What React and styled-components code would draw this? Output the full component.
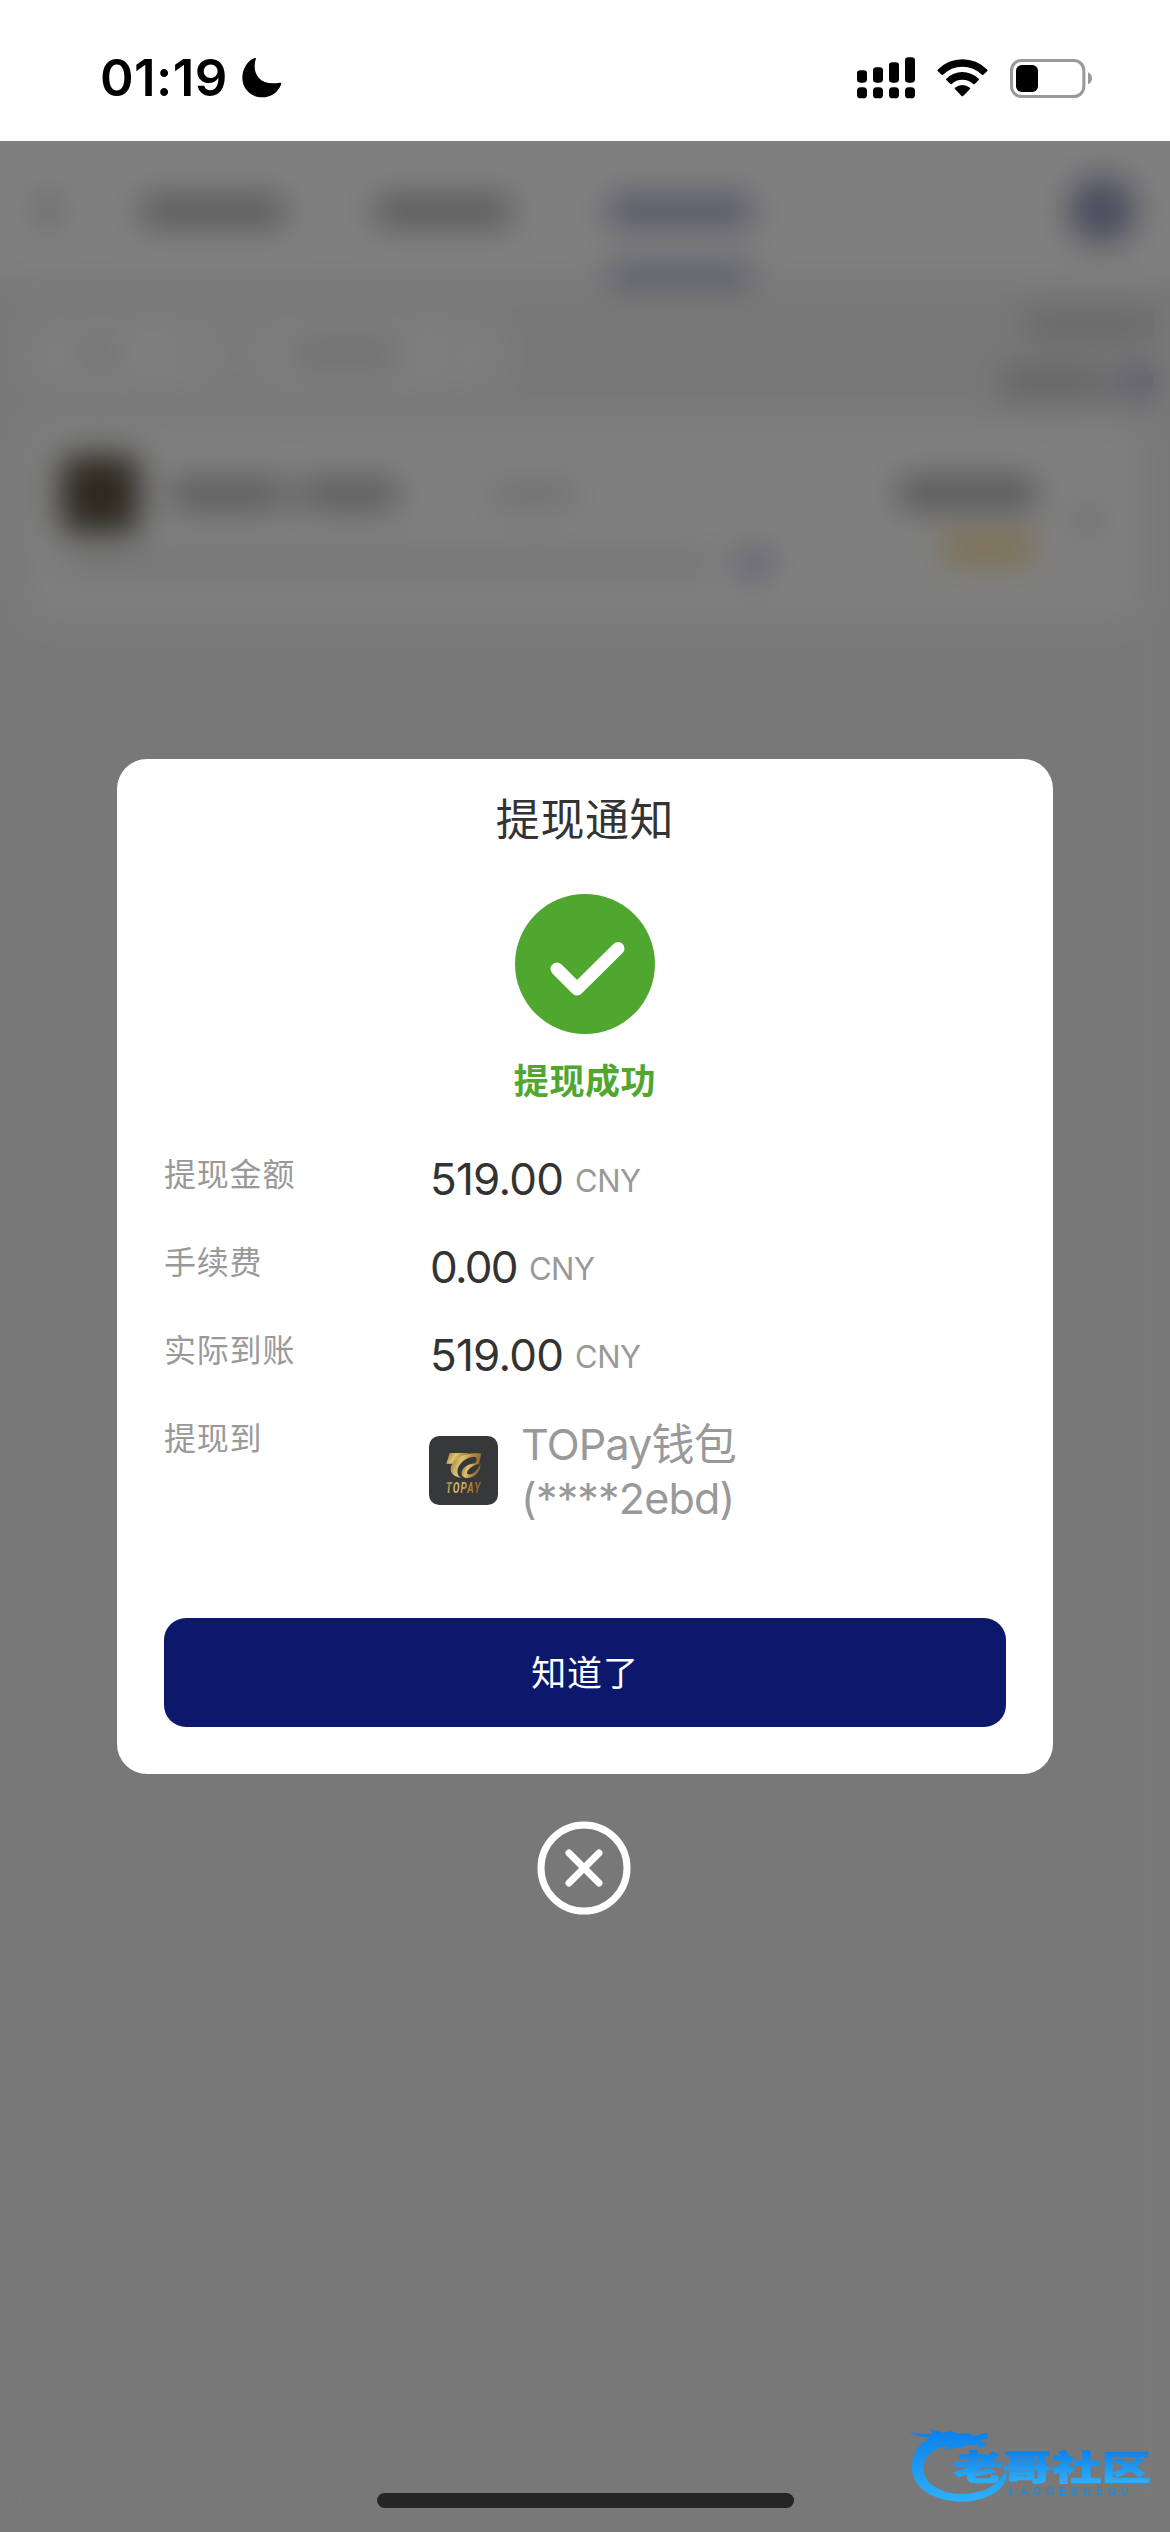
import React from 'react';
import styled, { createGlobalStyle } from "styled-components";


const GlobalStyle = createGlobalStyle`
  body {
    margin: 0;
    background-color: #fff;
    font-family: Inter, "Noto Sans CJK SC", sans-serif;
  }
`;
const Screen = styled.div`
  position: relative;
  width: 1170px;
  height: 2532px;
  overflow: hidden;
  display: flex;
  flex-direction: column;
`;

/* status bar */
const StatusBar = styled.header`
  height: 141px;
  flex: none;
  box-sizing: border-box;
  padding: 0 78px 0 100px;
  display: flex;
  align-items: center;
  justify-content: space-between;
  background-color: #fff;
`;
const StatusSide = styled.div`
  display: flex;
  align-items: center;
  gap: ${(props) => props.$gap}px;
  padding-top: 15px;
`;
const Time = styled.span`
  font-size: 51px;
  line-height: 60px;
  font-weight: 600;
  letter-spacing: 0.4px;
  color: #000;
`;

/* page behind the dialog */
const Page = styled.main`
  flex: 1;
  display: flex;
  flex-direction: column;
  background-color: #f1f1f1;
`;
const Nav = styled.nav`
  height: 138px;
  box-sizing: border-box;
  padding: 0 38px 0 40px;
  display: flex;
  align-items: center;
  background-color: #fff;
`;
const Block = styled.div`
  width: ${(props) => props.$w}px;
  height: ${(props) => props.$h || 32}px;
  margin-left: ${(props) => props.$ml || 0}px;
  border-radius: ${(props) => props.$r || 0}px;
  background-color: ${(props) => props.$c || "#b5b5b5"};
  flex: none;
`;
const Tab = styled.div`
  height: 138px;
  margin-left: ${(props) => props.$ml}px;
  display: flex;
  flex-direction: column;
  justify-content: space-between;
  padding-top: 54px;
  box-sizing: border-box;
`;
const Filters = styled.div`
  height: 144px;
  display: flex;
  align-items: center;
  padding: 5px 0 0 30px;
  box-sizing: border-box;
`;
const Pill = styled.div`
  width: ${(props) => props.$w}px;
  height: 68px;
  margin-right: 30px;
  border-radius: 34px;
  display: flex;
  align-items: center;
  background-color: #fff;
`;
const Totals = styled.div`
  margin-left: auto;
  display: flex;
  flex-direction: column;
  align-items: flex-end;
  gap: 26px;
  padding-right: 16px;
`;
const Line = styled.div`
  display: flex;
  align-items: center;
`;
const Record = styled.div`
  height: 197px;
  margin: 0 30px;
  border-radius: 24px;
  background-color: #fff;
  display: flex;
  box-sizing: border-box;
  padding: 32px 45px 0 31px;
`;
const RecordInfo = styled.div`
  flex: 1;
  display: flex;
  flex-direction: column;
  gap: 14px;
`;
const RecordAmount = styled.div`
  display: flex;
  flex-direction: column;
  align-items: flex-end;
  gap: 24px;
  padding: 22px 46px 0 0;
`;
const RecordArrow = styled.div`
  padding-top: 52px;
`;

/* dialog */
const Overlay = styled.div`
  position: absolute;
  top: 141px;
  left: 0;
  right: 0;
  bottom: 0;
  display: flex;
  flex-direction: column;
  align-items: center;
  padding-top: 618px;
  box-sizing: border-box;
  background-color: rgba(0, 0, 0, 0.5);
  backdrop-filter: blur(16px);
`;
const Dialog = styled.section`
  width: 936px;
  height: 1015px;
  flex: none;
  box-sizing: border-box;
  padding: 31px 47px 47px;
  border-radius: 30px;
  background-color: #fff;
  display: flex;
  flex-direction: column;
  align-items: center;
`;
const Title = styled.h1`
  margin: 0 0 44px;
  font-size: 44px;
  line-height: 60px;
  font-weight: 400;
  letter-spacing: 0.6px;
  color: #333;
`;
const Result = styled.p`
  margin: 21px 0 38px;
  font-size: 35px;
  line-height: 52px;
  font-weight: 700;
  letter-spacing: 0.6px;
  color: #4fa72f;
`;
const Rows = styled.div`
  width: 100%;
  flex: 1;
`;
const Row = styled.div`
  display: flex;
  height: 88px;
`;
const Label = styled.span`
  width: 266px;
  flex: none;
  font-size: 32px;
  line-height: 60px;
  letter-spacing: 0.8px;
  color: #999;
`;
const Amount = styled.span`
  font-size: 44px;
  line-height: 68px;
  letter-spacing: ${(props) => (props.$tight ? "-1.7px" : "-0.8px")};
  color: #333;
`;
const Currency = styled.span`
  margin-left: 12px;
  font-size: 31px;
  line-height: 1;
  letter-spacing: -0.5px;
  vertical-align: 3px;
  color: #999;
`;
const WalletIcon = styled.svg`
  margin: -1px 23px 0 -1px;
  flex: none;
`;
const Wallet = styled.div`
  display: flex;
  align-items: center;
  height: 108px;
  padding-top: 8px;
`;
const WalletName = styled.span`
  width: 260px;
  font-size: 43px;
  line-height: 54px;
  letter-spacing: -0.8px;
  color: #999;
`;
const Confirm = styled.button`
  width: 100%;
  height: 109px;
  flex: none;
  padding: 0 0 4px;
  border: none;
  border-radius: 22px;
  font-family: inherit;
  font-size: 35px;
  letter-spacing: 0.8px;
  color: #fff;
  background-color: #0c186c;
`;
const Close = styled.svg`
  margin: 47px 2px 0 0;
  flex: none;
`;

const HomeIndicator = styled.div`
  position: absolute;
  left: 377px;
  bottom: 24px;
  width: 417px;
  height: 15px;
  border-radius: 8px;
  background-color: #252525;
`;
const Watermark = styled.svg`
  position: absolute;
  right: 0;
  bottom: 0;
`;

const rows = [
  { label: "提现金额", amount: "519.00" },
  { label: "手续费", amount: "0.00" },
  { label: "实际到账", amount: "519.00" },
];

const Moon = () => (
  <svg width="40" height="40" viewBox="0 0 120 120">
    <path d="M42 1C28 42 50 86 113 74Q120 73 117 80C106 105 86 118 61 118C27 118 1 92 1 60C1 34 15 10 36 1Q42 -2 42 1Z" />
  </svg>
);

const Signal = () => (
  <svg width="58" height="42" viewBox="0 0 174 126">
    <rect x="0" y="40" width="30" height="37" rx="10" />
    <rect x="48" y="31" width="30" height="46" rx="10" />
    <rect x="96" y="16" width="30" height="61" rx="10" />
    <rect x="144" y="1" width="30" height="76" rx="10" />
    <rect x="0" y="91" width="30" height="33" rx="11" />
    <rect x="48" y="91" width="30" height="33" rx="11" />
    <rect x="96" y="91" width="30" height="33" rx="11" />
    <rect x="144" y="91" width="30" height="33" rx="11" />
  </svg>
);

const Wifi = () => (
  <svg width="51" height="38" viewBox="0 0 153 114">
    <path d="M2 32Q34 1 76 1T151 32Q153 34 151 36L139 47Q137 49 135 47Q110 23 76 23T18 47Q16 49 14 47L2 36Q0 34 2 32Z" />
    <path d="M28 59Q49 39 76 39T125 59Q127 61 125 63L113 75Q111 77 109 75Q95 62 76 62T44 75Q42 77 40 75L28 63Q26 61 28 59Z" />
    <path d="M54 86Q64 78 76 78T99 86Q101 88 99 90L79 110Q76 113 73 110L54 90Q52 88 54 86Z" />
  </svg>
);

const Battery = () => (
  <svg width="82" height="39" viewBox="0 0 246 117">
    <rect x="4.5" y="4.5" width="217" height="108" rx="30" fill="none" stroke="#999" strokeWidth="9" />
    <rect x="18" y="18" width="66" height="81" rx="17" />
    <path d="M234 40Q246 46 246 58T234 76Z" fill="#999" />
  </svg>
);

const TopayLogo = () => (
  <WalletIcon width="69" height="69" viewBox="0 0 207 207">
    <defs>
      <linearGradient id="gold" x1="0" y1="0" x2="1" y2="0.3">
        <stop offset="0" stopColor="#94702f" />
        <stop offset="0.4" stopColor="#dcc474" />
        <stop offset="0.7" stopColor="#b38a3c" />
        <stop offset="1" stopColor="#8a662c" />
      </linearGradient>
    </defs>
    <rect width="207" height="207" rx="31" fill="#36383a" />
    <path d="M62 51H124C103 57 87 68 79 83H52Z" fill="url(#gold)" />
    <path d="M157 53L150 84H136C143 76 146 67 139 64C122 58 91 78 86 100C83 114 90 123 99 126C76 125 60 110 66 91C75 64 113 47 157 53Z" fill="url(#gold)" />
    <path d="M150 84C132 79 107 87 99 104C93 120 106 127 118 126C139 124 156 104 154 84C148 103 129 118 117 115C107 110 124 89 150 84Z" fill="url(#gold)" />
    <g transform="translate(50 170) scale(0.7 1)">
      <text textLength="148" fontFamily="Roboto" fontSize="43" fontWeight="700" fontStyle="italic" fill="url(#gold)">TOPAY</text>
    </g>
  </WalletIcon>
);

const Community = () => (
  <Watermark width="290" height="132" viewBox="0 0 870 396">
    <defs>
      <linearGradient id="sea" gradientUnits="userSpaceOnUse" x1="0" y1="150" x2="0" y2="250">
        <stop offset="0" stopColor="#0a80ea" />
        <stop offset="1" stopColor="#2fb0fa" />
      </linearGradient>
      <linearGradient id="wave" gradientUnits="userSpaceOnUse" x1="0" y1="90" x2="0" y2="305">
        <stop offset="0" stopColor="#0a80ea" />
        <stop offset="1" stopColor="#2fb0fa" />
      </linearGradient>
    </defs>
    <path d="M90 95C113 104 134 100 157 102L150 86L188 98L212 94L239 101L263 99L281 107L304 102L321 98L325 116L300 120L319 133L312 143L287 136L266 135L244 142L218 145L194 153L204 139C165 140 130 170 130 205C130 248 180 282 246 282C310 280 350 258 374 218L381 222C380 268 320 304 249 305C160 305 96 262 96 204C96 160 115 132 148 114C127 106 103 112 90 95Z" fill="url(#wave)" />
    <text x="219" y="239" fontFamily="Noto Sans CJK SC" fontWeight="900" fontSize="102" textLength="594" lengthAdjust="spacingAndGlyphs" fill="url(#sea)" stroke="url(#sea)" strokeWidth="2">老哥社区</text>
    <text x="388" y="284" fontFamily="Inter" fontSize="32" fontWeight="500" textLength="359" fill="#168bdd">LAOGESHEQU</text>
  </Watermark>
);

const App = () => {
  return (
    <Screen>
      <GlobalStyle />
      <StatusBar>
        <StatusSide $gap={14}>
          <Time>01:19</Time>
          <Moon />
        </StatusSide>
        <StatusSide $gap={22}>
          <Signal />
          <Wifi />
          <Battery />
        </StatusSide>
      </StatusBar>

      <Page>
        <Nav>
          <Block $w={16} $h={34} $c="#c4c4c4" />
          <Tab $ml={86}><Block $w={142} /></Tab>
          <Tab $ml={92}><Block $w={134} /></Tab>
          <Tab $ml={99}>
            <Block $w={142} $c="#b0b0cf" />
            <Block $w={142} $h={9} $c="#525b98" />
          </Tab>
          <Block $w={68} $h={68} $r={34} $ml={317} $c="#9a9abd" />
        </Nav>
        <Filters>
          <Pill $w={192}>
            <Block $w={42} $h={28} $ml={48} $c="#e6e6e6" />
            <Block $w={16} $h={14} $ml={56} $c="#e4e4e4" />
          </Pill>
          <Pill $w={248}>
            <Block $w={108} $h={28} $ml={40} $c="#e0e0e0" />
            <Block $w={16} $h={14} $ml={46} $c="#e4e4e4" />
          </Pill>
          <Totals>
            <Block $w={130} $h={30} $c="#d0d0d0" />
            <Line>
              <Block $w={104} $h={30} $c="#c6c6c6" />
              <Block $w={34} $h={34} $r={17} $ml={14} $c="#acaccb" />
            </Line>
          </Totals>
        </Filters>
        <Record>
          <RecordInfo>
            <Line>
              <Block $w={78} $h={78} $r={10} $c="#58523f" />
              <Block $w={104} $h={30} $ml={32} />
              <Block $w={36} $h={26} $c="#d4d4d4" />
              <Block $w={86} $h={30} />
              <Block $w={84} $h={26} $ml={94} $c="#e3e3e3" />
            </Line>
            <Line>
              <Block $w={650} $h={24} $c="#e8e8e8" />
              <Block $w={30} $h={32} $r={15} $ml={28} $c="#b8b8dc" />
            </Line>
          </RecordInfo>
          <RecordAmount>
            <Block $w={136} $h={32} $c="#b0b0b0" />
            <Block $w={92} $h={30} $c="#ffe1a0" />
          </RecordAmount>
          <RecordArrow>
            <Block $w={14} $h={26} $c="#c4c4c4" />
          </RecordArrow>
        </Record>
      </Page>

      <Overlay>
        <Dialog>
          <Title>提现通知</Title>
          <svg width="140" height="140" viewBox="0 0 140 140">
            <circle cx="70" cy="70" r="70" fill="#4fa72f" />
            <path d="M42 75L62 95L103 54.5" fill="none" stroke="#fff" strokeWidth="13" strokeLinecap="round" strokeLinejoin="round" />
          </svg>
          <Result>提现成功</Result>
          <Rows>
            {rows.map((row) => (
              <Row key={row.label}>
                <Label>{row.label}</Label>
                <Amount $tight={row.amount === "0.00"}>{row.amount}<Currency>CNY</Currency></Amount>
              </Row>
            ))}
            <Row>
              <Label>提现到</Label>
              <Wallet>
                <TopayLogo />
                <WalletName>TOPay钱包 (****2ebd)</WalletName>
              </Wallet>
            </Row>
          </Rows>
          <Confirm>知道了</Confirm>
        </Dialog>
        <Close width="94" height="94" viewBox="0 0 94 94" fill="none" stroke="#fff" strokeWidth="7" strokeLinecap="round">
          <circle cx="47" cy="47" r="43" />
          <path d="M32 32L62 62M62 32L32 62" />
        </Close>
      </Overlay>
      <Community />
      <HomeIndicator />
    </Screen>
  )
}

export default App
